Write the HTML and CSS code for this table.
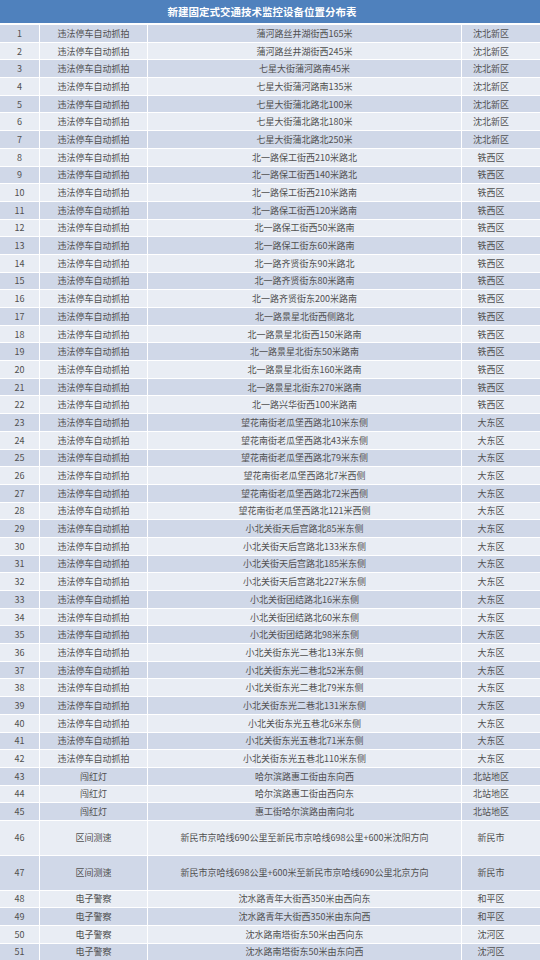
FILE: index.html
```html
<!DOCTYPE html>
<html lang="zh">
<head>
<meta charset="utf-8">
<title>新建固定式交通技术监控设备位置分布表</title>
<link rel="stylesheet" href="styles.css">
</head>
<body>
<div class="table">
  <div class="title">新建固定式交通技术监控设备位置分布表</div>

  <div class="c n odd">1</div><div class="c t odd">违法停车自动抓拍</div><div class="c l odd">蒲河路丝井湖街西165米</div><div class="c d odd">沈北新区</div>
  <div class="c n">2</div><div class="c t">违法停车自动抓拍</div><div class="c l">蒲河路丝井湖街西245米</div><div class="c d">沈北新区</div>
  <div class="c n odd">3</div><div class="c t odd">违法停车自动抓拍</div><div class="c l odd">七星大街蒲河路南45米</div><div class="c d odd">沈北新区</div>
  <div class="c n">4</div><div class="c t">违法停车自动抓拍</div><div class="c l">七星大街蒲河路南135米</div><div class="c d">沈北新区</div>
  <div class="c n odd">5</div><div class="c t odd">违法停车自动抓拍</div><div class="c l odd">七星大街蒲北路北100米</div><div class="c d odd">沈北新区</div>
  <div class="c n">6</div><div class="c t">违法停车自动抓拍</div><div class="c l">七星大街蒲北路北180米</div><div class="c d">沈北新区</div>
  <div class="c n odd">7</div><div class="c t odd">违法停车自动抓拍</div><div class="c l odd">七星大街蒲北路北250米</div><div class="c d odd">沈北新区</div>
  <div class="c n">8</div><div class="c t">违法停车自动抓拍</div><div class="c l">北一路保工街西210米路北</div><div class="c d">铁西区</div>
  <div class="c n odd">9</div><div class="c t odd">违法停车自动抓拍</div><div class="c l odd">北一路保工街西140米路北</div><div class="c d odd">铁西区</div>
  <div class="c n">10</div><div class="c t">违法停车自动抓拍</div><div class="c l">北一路保工街西210米路南</div><div class="c d">铁西区</div>
  <div class="c n odd">11</div><div class="c t odd">违法停车自动抓拍</div><div class="c l odd">北一路保工街西120米路南</div><div class="c d odd">铁西区</div>
  <div class="c n">12</div><div class="c t">违法停车自动抓拍</div><div class="c l">北一路保工街西50米路南</div><div class="c d">铁西区</div>
  <div class="c n odd">13</div><div class="c t odd">违法停车自动抓拍</div><div class="c l odd">北一路保工街东60米路南</div><div class="c d odd">铁西区</div>
  <div class="c n">14</div><div class="c t">违法停车自动抓拍</div><div class="c l">北一路齐贤街东90米路北</div><div class="c d">铁西区</div>
  <div class="c n odd">15</div><div class="c t odd">违法停车自动抓拍</div><div class="c l odd">北一路齐贤街东80米路南</div><div class="c d odd">铁西区</div>
  <div class="c n">16</div><div class="c t">违法停车自动抓拍</div><div class="c l">北一路齐贤街东200米路南</div><div class="c d">铁西区</div>
  <div class="c n odd">17</div><div class="c t odd">违法停车自动抓拍</div><div class="c l odd">北一路景星北街西侧路北</div><div class="c d odd">铁西区</div>
  <div class="c n">18</div><div class="c t">违法停车自动抓拍</div><div class="c l">北一路景星北街西150米路南</div><div class="c d">铁西区</div>
  <div class="c n odd">19</div><div class="c t odd">违法停车自动抓拍</div><div class="c l odd">北一路景星北街东50米路南</div><div class="c d odd">铁西区</div>
  <div class="c n">20</div><div class="c t">违法停车自动抓拍</div><div class="c l">北一路景星北街东160米路南</div><div class="c d">铁西区</div>
  <div class="c n odd">21</div><div class="c t odd">违法停车自动抓拍</div><div class="c l odd">北一路景星北街东270米路南</div><div class="c d odd">铁西区</div>
  <div class="c n">22</div><div class="c t">违法停车自动抓拍</div><div class="c l">北一路兴华街西100米路南</div><div class="c d">铁西区</div>
  <div class="c n odd">23</div><div class="c t odd">违法停车自动抓拍</div><div class="c l odd">望花南街老瓜堡西路北10米东侧</div><div class="c d odd">大东区</div>
  <div class="c n">24</div><div class="c t">违法停车自动抓拍</div><div class="c l">望花南街老瓜堡西路北43米东侧</div><div class="c d">大东区</div>
  <div class="c n odd">25</div><div class="c t odd">违法停车自动抓拍</div><div class="c l odd">望花南街老瓜堡西路北79米东侧</div><div class="c d odd">大东区</div>
  <div class="c n">26</div><div class="c t">违法停车自动抓拍</div><div class="c l">望花南街老瓜堡西路北7米西侧</div><div class="c d">大东区</div>
  <div class="c n odd">27</div><div class="c t odd">违法停车自动抓拍</div><div class="c l odd">望花南街老瓜堡西路北72米西侧</div><div class="c d odd">大东区</div>
  <div class="c n">28</div><div class="c t">违法停车自动抓拍</div><div class="c l">望花南街老瓜堡西路北121米西侧</div><div class="c d">大东区</div>
  <div class="c n odd">29</div><div class="c t odd">违法停车自动抓拍</div><div class="c l odd">小北关街天后宫路北85米东侧</div><div class="c d odd">大东区</div>
  <div class="c n">30</div><div class="c t">违法停车自动抓拍</div><div class="c l">小北关街天后宫路北133米东侧</div><div class="c d">大东区</div>
  <div class="c n odd">31</div><div class="c t odd">违法停车自动抓拍</div><div class="c l odd">小北关街天后宫路北185米东侧</div><div class="c d odd">大东区</div>
  <div class="c n">32</div><div class="c t">违法停车自动抓拍</div><div class="c l">小北关街天后宫路北227米东侧</div><div class="c d">大东区</div>
  <div class="c n odd">33</div><div class="c t odd">违法停车自动抓拍</div><div class="c l odd">小北关街团结路北16米东侧</div><div class="c d odd">大东区</div>
  <div class="c n">34</div><div class="c t">违法停车自动抓拍</div><div class="c l">小北关街团结路北60米东侧</div><div class="c d">大东区</div>
  <div class="c n odd">35</div><div class="c t odd">违法停车自动抓拍</div><div class="c l odd">小北关街团结路北98米东侧</div><div class="c d odd">大东区</div>
  <div class="c n">36</div><div class="c t">违法停车自动抓拍</div><div class="c l">小北关街东光二巷北13米东侧</div><div class="c d">大东区</div>
  <div class="c n odd">37</div><div class="c t odd">违法停车自动抓拍</div><div class="c l odd">小北关街东光二巷北52米东侧</div><div class="c d odd">大东区</div>
  <div class="c n">38</div><div class="c t">违法停车自动抓拍</div><div class="c l">小北关街东光二巷北79米东侧</div><div class="c d">大东区</div>
  <div class="c n odd">39</div><div class="c t odd">违法停车自动抓拍</div><div class="c l odd">小北关街东光二巷北131米东侧</div><div class="c d odd">大东区</div>
  <div class="c n">40</div><div class="c t">违法停车自动抓拍</div><div class="c l">小北关街东光五巷北6米东侧</div><div class="c d">大东区</div>
  <div class="c n odd">41</div><div class="c t odd">违法停车自动抓拍</div><div class="c l odd">小北关街东光五巷北71米东侧</div><div class="c d odd">大东区</div>
  <div class="c n">42</div><div class="c t">违法停车自动抓拍</div><div class="c l">小北关街东光五巷北110米东侧</div><div class="c d">大东区</div>
  <div class="c n odd">43</div><div class="c t odd">闯红灯</div><div class="c l odd">哈尔滨路惠工街由东向西</div><div class="c d odd">北站地区</div>
  <div class="c n">44</div><div class="c t">闯红灯</div><div class="c l">哈尔滨路惠工街由西向东</div><div class="c d">北站地区</div>
  <div class="c n odd">45</div><div class="c t odd">闯红灯</div><div class="c l odd">惠工街哈尔滨路由南向北</div><div class="c d odd">北站地区</div>
  <div class="c n tall">46</div><div class="c t tall">区间测速</div><div class="c l tall">新民市京哈线690公里至新民市京哈线698公里+600米沈阳方向</div><div class="c d tall">新民市</div>
  <div class="c n tall odd">47</div><div class="c t tall odd">区间测速</div><div class="c l tall odd">新民市京哈线698公里+600米至新民市京哈线690公里北京方向</div><div class="c d tall odd">新民市</div>
  <div class="c n">48</div><div class="c t">电子警察</div><div class="c l">沈水路青年大街西350米由西向东</div><div class="c d">和平区</div>
  <div class="c n odd">49</div><div class="c t odd">电子警察</div><div class="c l odd">沈水路青年大街西350米由东向西</div><div class="c d odd">和平区</div>
  <div class="c n">50</div><div class="c t">电子警察</div><div class="c l">沈水路南塔街东50米由西向东</div><div class="c d">沈河区</div>
  <div class="c n odd">51</div><div class="c t odd">电子警察</div><div class="c l odd">沈水路南塔街东50米由东向西</div><div class="c d odd">沈河区</div>
</div>
</body>
</html>
```

FILE: styles.css
```css
html, body {
  margin: 0;
  padding: 0;
  background: #ffffff;
}

body {
  width: 540px;
  height: 960px;
  overflow: hidden;
  font-family: "Noto Sans CJK SC", "Noto Sans", sans-serif;
}

.table {
  display: grid;
  grid-template-columns: 39px 107px 313px 78px;
  column-gap: 1px;
  row-gap: 1px;
  background: #ffffff;
  width: 540px;
}

.title {
  grid-column: 1 / span 4;
  height: 23px;
  margin-bottom: 1px;
  background: #4f81bd;
  color: #ffffff;
  font-size: 10.5px;
  font-weight: bold;
  display: flex;
  align-items: center;
  justify-content: center;
  padding-right: 16px;
}

.c {
  height: 16.7px;
  background: #e9edf4;
  color: #505050;
  font-size: 9px;
  line-height: 1;
  display: flex;
  align-items: center;
  justify-content: center;
  white-space: nowrap;
}

.c.odd {
  background: #d0d8e8;
}

.c.tall {
  height: 33.8px;
}

.d {
  padding-right: 20px;
}
```
